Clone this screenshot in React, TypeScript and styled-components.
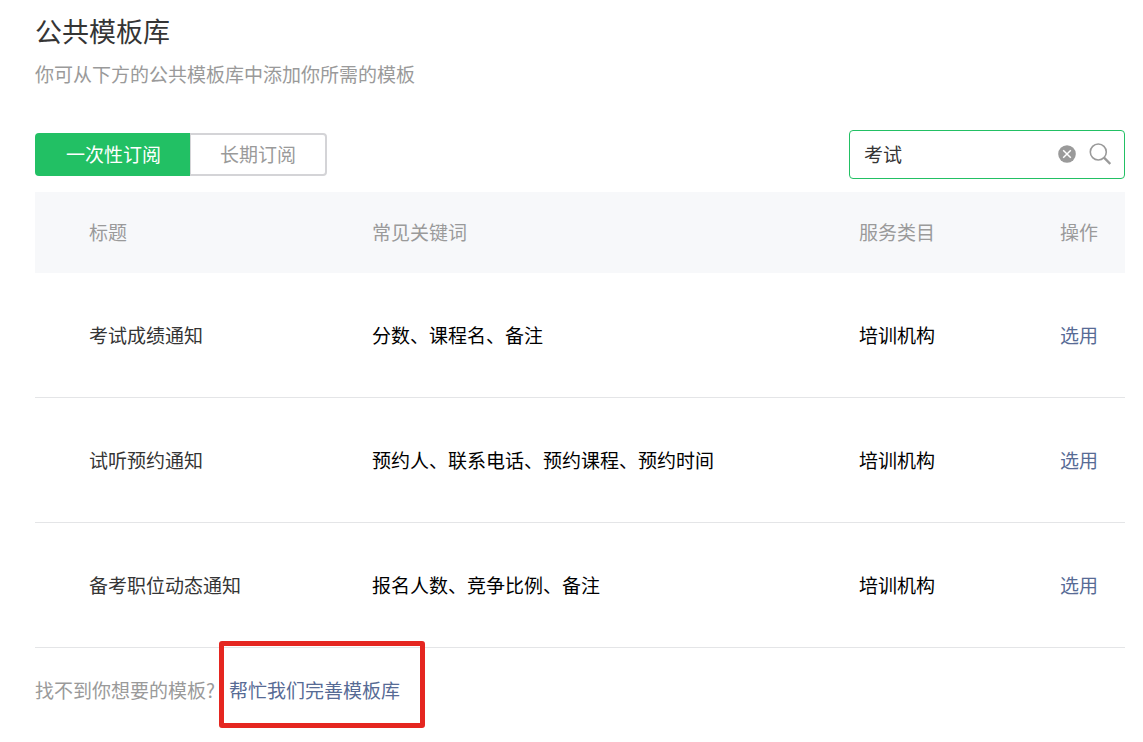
import React, { useState } from 'react';
import styled, { createGlobalStyle, css } from 'styled-components';

const GlobalStyle = createGlobalStyle`
  *, *::before, *::after { box-sizing: border-box; }
  body {
    margin: 0;
    background: #fff;
    color: #353535;
    font-family: 'Noto Sans CJK SC', sans-serif;
    font-size: 19px;
    font-weight: 400;
    line-height: 28px;
  }
  button, input { font: inherit; }
`;

const Page = styled.main`
  padding: 13px 18px 24px 35px;
`;

const Title = styled.h1`
  margin: 0;
  font-size: 27px;
  font-weight: 400;
  line-height: 36px;
`;

const Subtitle = styled.p`
  margin: 11px 0 0;
  color: #9a9a9a;
`;

const Toolbar = styled.div`
  display: flex;
  align-items: center;
  justify-content: space-between;
  margin-top: 42px;
`;

const Tabs = styled.div`
  display: flex;
`;

const Tab = styled.button<{ $active: boolean }>`
  height: 43px;
  padding: 0 29px 2px;
  border: 2px solid #d4d4d7;
  background: #fff;
  color: #9a9a9a;
  cursor: pointer;

  &:first-child { border-radius: 4px 0 0 4px; border-right: 0; }
  &:last-child { border-radius: 0 4px 4px 0; border-left-width: 1px; }

  ${({ $active }) =>
    $active &&
    css`
      border-color: #22c064;
      background: #22c064;
      color: #fff;
    `}
`;

const SearchBox = styled.div`
  display: flex;
  align-items: center;
  width: 276px;
  height: 49px;
  padding: 0 13px 2px 14px;
  border: 1px solid #22c064;
  border-radius: 4px;
`;

const SearchInput = styled.input`
  flex: 1;
  min-width: 0;
  padding: 0;
  border: 0;
  outline: 0;
  background: transparent;
  color: #353535;
`;

const IconButton = styled.button`
  display: flex;
  padding: 0;
  border: 0;
  background: none;
  color: #9a9a9a;
  cursor: pointer;

  & + & { margin-left: 12px; }
`;

const Table = styled.table`
  width: 100%;
  margin-top: 13px;
  border-collapse: separate;
  border-spacing: 0;
  table-layout: fixed;
`;

const HeadCell = styled.th<{ $width?: number }>`
  width: ${({ $width }) => ($width ? `${$width}px` : 'auto')};
  height: 81px;
  padding: 0 0 2px;
  background: #f7f8fa;
  color: #9a9a9a;
  font-weight: 400;
  text-align: left;

  &:first-child { padding-left: 54px; }
`;

const Cell = styled.td`
  height: 125px;
  padding: 0 0 1px;
  border-bottom: 1px solid #e4e5e7;
  color: #000;

  &:first-child { padding-left: 54px; color: #353535; }
`;

const Link = styled.a`
  color: #576b95;
  text-decoration: none;
`;

const Footer = styled.p`
  display: flex;
  gap: 14px;
  margin: 28px 0 0;
  color: #9a9a9a;
`;

const Highlighted = styled.span`
  position: relative;

  &::after {
    content: '';
    position: absolute;
    inset: -35px -25px -24px -10px;
    border: 5px solid #e52620;
    border-radius: 3px;
    pointer-events: none;
  }
`;

const ClearIcon = () => (
  <svg width="20" height="20" viewBox="0 0 20 20" aria-hidden="true">
    <circle cx="10" cy="10" r="8.8" fill="currentColor" />
    <path d="M6.2 6.2l7.6 7.6M13.8 6.2l-7.6 7.6" stroke="#fff" strokeWidth="1.5" />
  </svg>
);

const SearchIcon = () => (
  <svg width="22" height="22" viewBox="0 0 22 22" fill="none" stroke="currentColor" aria-hidden="true">
    <circle cx="9.3" cy="9" r="8" strokeWidth="1.6" />
    <path d="M15 14.7l6.3 6.3" strokeWidth="2.4" />
  </svg>
);

const tabs = ['一次性订阅', '长期订阅'];

const templates = [
  { title: '考试成绩通知', keywords: '分数、课程名、备注', category: '培训机构' },
  { title: '试听预约通知', keywords: '预约人、联系电话、预约课程、预约时间', category: '培训机构' },
  { title: '备考职位动态通知', keywords: '报名人数、竞争比例、备注', category: '培训机构' },
];

export default function App() {
  const [active, setActive] = useState(tabs[0]);
  const [query, setQuery] = useState('考试');

  return (
    <>
      <GlobalStyle />
      <Page>
        <Title>公共模板库</Title>
        <Subtitle>你可从下方的公共模板库中添加你所需的模板</Subtitle>
        <Toolbar>
          <Tabs>
            {tabs.map((tab) => (
              <Tab
                key={tab}
                type="button"
                $active={tab === active}
                aria-pressed={tab === active}
                onClick={() => setActive(tab)}
              >
                {tab}
              </Tab>
            ))}
          </Tabs>
          <SearchBox role="search">
            <SearchInput
              type="text"
              aria-label="搜索模板"
              value={query}
              onChange={(e) => setQuery(e.target.value)}
            />
            <IconButton type="button" aria-label="清除" onClick={() => setQuery('')}>
              <ClearIcon />
            </IconButton>
            <IconButton type="button" aria-label="搜索">
              <SearchIcon />
            </IconButton>
          </SearchBox>
        </Toolbar>
        <Table>
          <thead>
            <tr>
              <HeadCell scope="col" $width={337}>标题</HeadCell>
              <HeadCell scope="col">常见关键词</HeadCell>
              <HeadCell scope="col" $width={201}>服务类目</HeadCell>
              <HeadCell scope="col" $width={65}>操作</HeadCell>
            </tr>
          </thead>
          <tbody>
            {templates.map((item) => (
              <tr key={item.title}>
                <Cell>{item.title}</Cell>
                <Cell>{item.keywords}</Cell>
                <Cell>{item.category}</Cell>
                <Cell>
                  <Link href="#use">选用</Link>
                </Cell>
              </tr>
            ))}
          </tbody>
        </Table>
        <Footer>
          找不到你想要的模板?
          <Highlighted>
            <Link href="#improve">帮忙我们完善模板库</Link>
          </Highlighted>
        </Footer>
      </Page>
    </>
  );
}
